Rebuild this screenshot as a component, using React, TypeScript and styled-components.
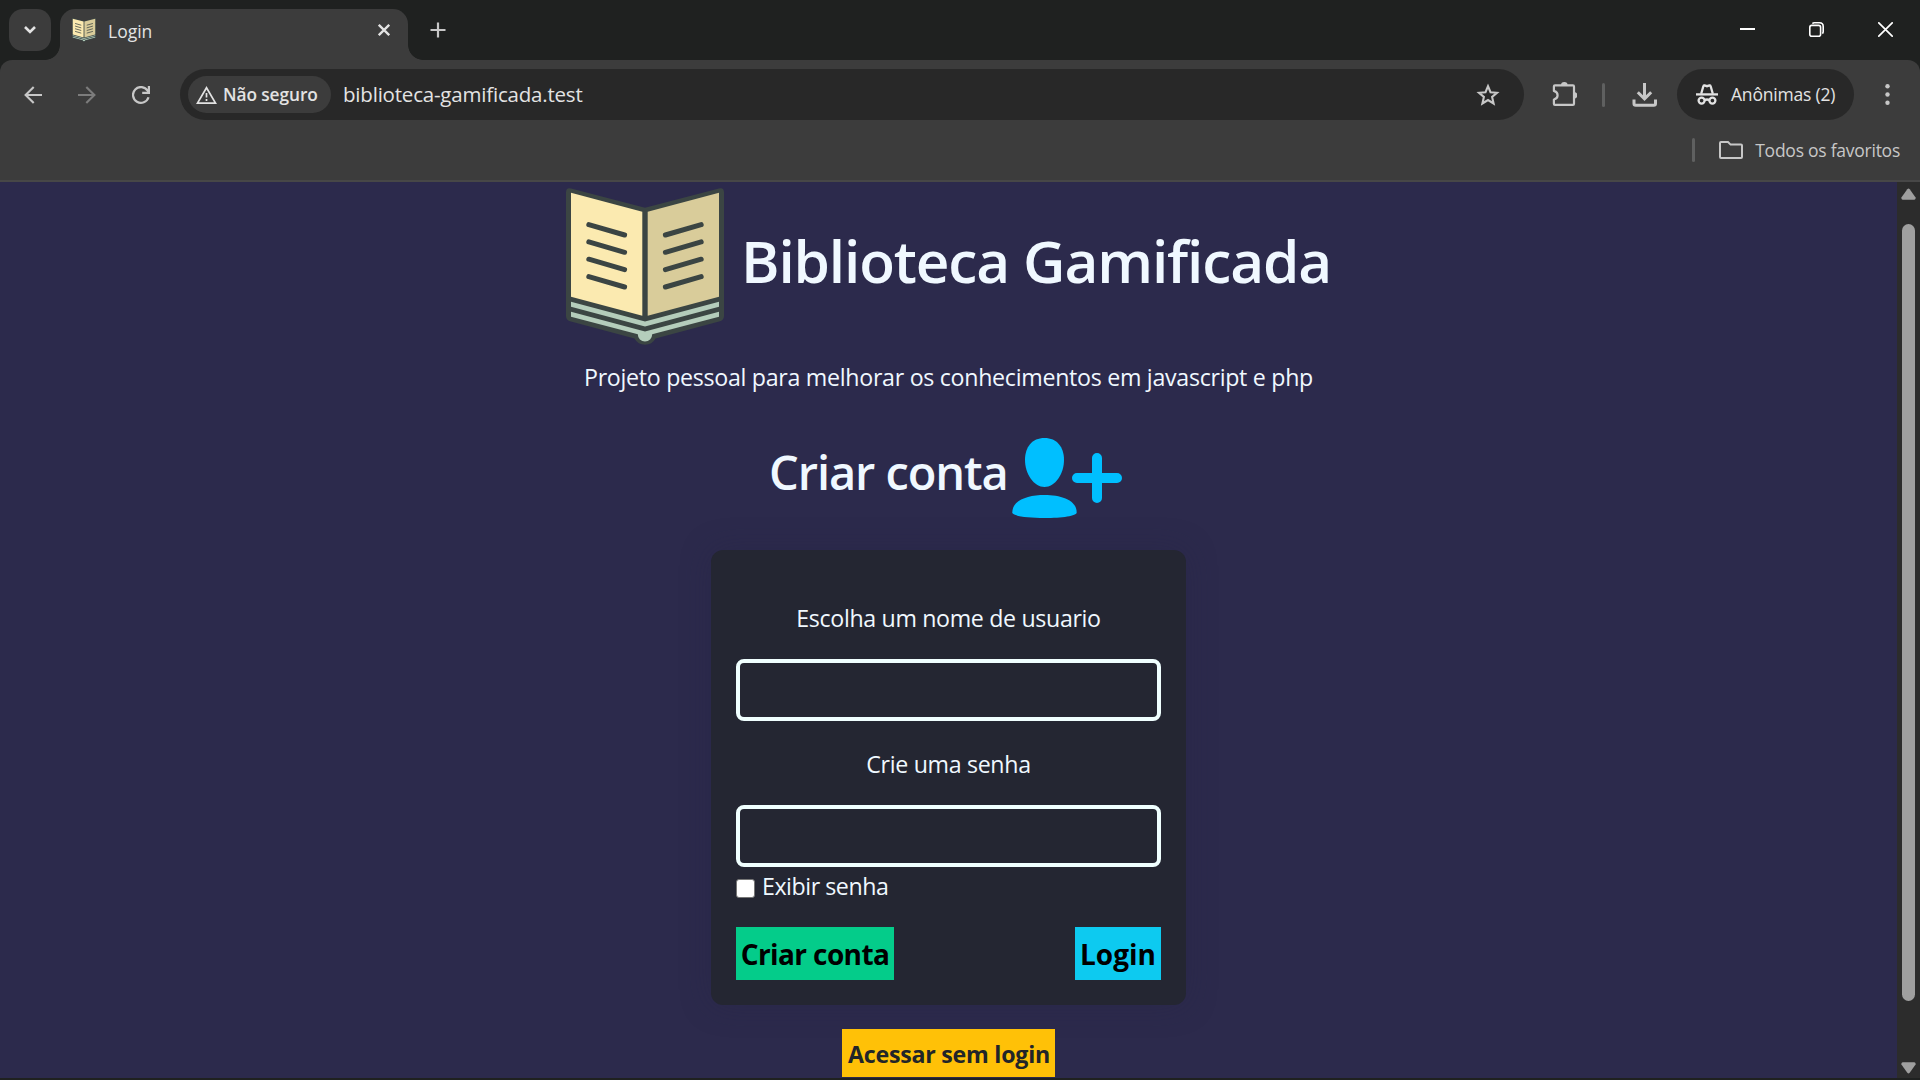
import React from "react";
import styled, { createGlobalStyle } from "styled-components";

const GlobalStyle = createGlobalStyle`
  * { box-sizing: border-box; }
  html, body { margin: 0; padding: 0; background: #1f2120; overflow: hidden; }
  body, button, input { font-family: "Open Sans", "Noto Sans", sans-serif; }
  svg { display: block; flex: none; }
`;

const Window = styled.div`
  width: 1920px;
  height: 1080px;
  display: flex;
  flex-direction: column;
  overflow: hidden;
  background: #1f2120;
`;

/* ---------- tab strip ---------- */
const TabStrip = styled.div`
  height: 60px;
  flex: none;
  display: flex;
  align-items: flex-start;
  padding: 9px 27px 0 9px;
`;

const TabSearch = styled.button`
  width: 42px;
  height: 42px;
  border: 0;
  padding: 0;
  border-radius: 14px;
  background: #3c3c3c;
  display: grid;
  place-items: center;
  margin-right: 9px;
`;

const Tab = styled.div`
  position: relative;
  width: 348px;
  height: 51px;
  border-radius: 15px 15px 0 0;
  background: #3c3c3c;
  display: flex;
  align-items: flex-start;
  padding: 9px 18px 0 12px;

  &::before,
  &::after {
    content: "";
    position: absolute;
    bottom: 0;
    width: 15px;
    height: 15px;
  }
  &::before {
    left: -15px;
    background: radial-gradient(circle at 0 0, transparent 14.5px, #3c3c3c 15.2px);
  }
  &::after {
    right: -15px;
    background: radial-gradient(circle at 100% 0, transparent 14.5px, #3c3c3c 15.2px);
  }
`;

const TabTitle = styled.span`
  flex: 1;
  margin-left: 12px;
  font-size: 17.5px;
  line-height: 26px;
  color: #e3e3e3;
`;

const TabClose = styled.div`
  padding-top: 6px;
`;

const NewTab = styled.div`
  margin: 13px 0 0 22px;
`;

const WindowControls = styled.div`
  margin-left: auto;
  display: flex;
  gap: 54px;
  padding-top: 13px;
`;

/* ---------- toolbar ---------- */
const Chrome = styled.div`
  height: 122px;
  flex: none;
  background: #3c3c3c;
  border-radius: 12px 12px 0 0;
  border-bottom: 2px solid #474747;
`;

const Toolbar = styled.div`
  display: flex;
  align-items: center;
  height: 69px;
  padding: 0 29px 0 24px;
`;

const NavIcons = styled.div`
  display: flex;
  gap: 36px;
  width: 156px;
`;

const Omnibox = styled.div`
  width: 1344px;
  height: 51px;
  border-radius: 26px;
  background: #282828;
  display: flex;
  align-items: center;
  padding: 0 24px 0 8px;
`;

const SecurityChip = styled.div`
  width: 143px;
  height: 37px;
  border-radius: 19px;
  background: #3c3c3c;
  display: flex;
  align-items: center;
  gap: 6px;
  padding-left: 8px;
`;

const ChipText = styled.span`
  font-size: 17.3px;
  font-weight: 600;
  letter-spacing: -0.08px;
  line-height: 26px;
  white-space: nowrap;
  color: #e3e3e3;
`;

const Url = styled.span`
  flex: 1;
  margin-left: 12px;
  font-size: 20.5px;
  letter-spacing: -0.2px;
  line-height: 30px;
  color: #e3e3e3;
  padding-bottom: 2px;
`;

const Separator = styled.div`
  width: 3px;
  height: 24px;
  border-radius: 2px;
  background: #5f6060;
`;

const Actions = styled.div`
  display: flex;
  align-items: center;
  padding-left: 28px;
  gap: 26px;
`;

const ToolbarDivider = styled(Separator)`
  margin: 0 1px 0 -1px;
`;

const IncognitoPill = styled.div`
  width: 177px;
  height: 51px;
  border-radius: 26px;
  background: #282828;
  display: flex;
  align-items: center;
  padding-left: 19px;
  gap: 13px;
  margin-left: -6px;
`;

const PillText = styled.span`
  font-size: 17.5px;
  letter-spacing: -0.2px;
  white-space: nowrap;
  line-height: 26px;
  padding-bottom: 1px;
  color: #e3e3e3;
`;

const Menu = styled.div`
  margin-left: 5px;
`;

const BookmarksBar = styled.div`
  height: 42px;
  display: flex;
  align-items: center;
  justify-content: flex-end;
  padding-right: 20px;
`;

const FolderIcon = styled.div`
  margin: 0 12px 0 24px;
`;

const BookmarksText = styled.span`
  font-size: 17.5px;
  letter-spacing: -0.25px;
  line-height: 26px;
  padding-bottom: 1px;
  color: #c7c7c7;
`;

/* ---------- page ---------- */
const Viewport = styled.div`
  height: 896px;
  flex: none;
  display: flex;
  background: #2c2a4c;
`;

const Page = styled.main`
  flex: 1;
  display: flex;
  flex-direction: column;
  align-items: center;
  padding-top: 6px;
  color: #f0f8ff;
`;

const Brand = styled.header`
  display: flex;
  align-items: flex-start;
  gap: 17px;
`;

const BrandName = styled.h1`
  margin: 0;
  width: 590px;
  white-space: nowrap;
  font-size: 58.5px;
  font-weight: 600;
  letter-spacing: -1.14px;
  line-height: 144px;
`;

const Tagline = styled.p`
  margin: 13px 0 0;
  font-size: 23.2px;
  letter-spacing: -0.29px;
  line-height: 36px;
`;

const SectionHead = styled.div`
  display: flex;
  margin-top: 43px;
  height: 80px;
  gap: 4px;
`;

const SectionTitle = styled.h2`
  margin: 0;
  padding-left: 1px;
  width: 240px;
  white-space: nowrap;
  font-size: 47px;
  font-weight: 600;
  letter-spacing: -1.08px;
  line-height: 69px;
`;

const Card = styled.form`
  margin: 32px 0 0;
  width: 475px;
  height: 455px;
  flex: none;
  padding: 25px;
  border-radius: 12px;
  background: #242632;
  box-shadow: 0 0 30px rgba(37, 38, 70, 0.35);
  display: flex;
  flex-direction: column;
`;

const FieldLabel = styled.label<{ $track: number }>`
  margin: 25px 0 23px;
  text-align: center;
  font-size: 23.2px;
  letter-spacing: ${(p) => p.$track}px;
  line-height: 36px;
`;

const Field = styled.input`
  width: 100%;
  height: 62px;
  flex: none;
  border: 4px solid #f0ffff;
  border-radius: 8px;
  background: transparent;
  color: #f0f8ff;
  font-size: 24px;
  outline: none;
`;

const CheckRow = styled.label`
  display: flex;
  margin-top: 1px;
  height: 36px;
  font-size: 23.2px;
  letter-spacing: -0.45px;
  line-height: 36px;
`;

const Check = styled.input`
  appearance: none;
  width: 19px;
  height: 19px;
  margin: 11px 7px 0 0;
  border: 1.5px solid #767676;
  border-radius: 3px;
  background: #fff;
`;

const ButtonRow = styled.div`
  display: flex;
  justify-content: space-between;
  margin-top: 23px;
`;

const FormButton = styled.button<{ $bg: string; $width: number; $track: number }>`
  width: ${(p) => p.$width}px;
  height: 53px;
  padding: 1px 0 0;
  border: 0;
  background: ${(p) => p.$bg};
  color: #000;
  font-size: 28px;
  font-weight: 700;
  letter-spacing: ${(p) => p.$track}px;
  white-space: nowrap;
`;

const GuestButton = styled.button`
  margin-top: 24px;
  width: 213px;
  height: 48px;
  flex: none;
  padding: 2px 0 0 1px;
  border: 0;
  background: #ffc107;
  color: #212529;
  font-size: 23.2px;
  font-weight: 700;
  letter-spacing: -0.24px;
  white-space: nowrap;
`;

const Scrollbar = styled.div`
  width: 23px;
  background: #2c2c2c;
  display: flex;
  flex-direction: column;
  align-items: center;
  padding: 6px 0 4px;
`;

const Thumb = styled.div`
  width: 13px;
  height: 777px;
  margin: 24px 0 61px;
  border-radius: 7px;
  background: #9f9f9f;
`;

function Book({ size }: { size: number }) {
  const rows = [0, 17.3, 34.6, 52];
  return (
    <svg width={size} height={size} viewBox="0 0 158 158">
      <path
        fill="#3b4543"
        d="M0 4.5Q0-.8 5 .4L79 19.7 153 .4Q158-.8 158 4.5V128Q158 132 154 133.2L89.5 150.5A12 12 0 0 1 68.5 150.5L4 133.2Q0 132 0 128Z"
      />
      <path fill="#fbeab0" d="M5 4.7 76.3 23.7V127.7L5 108.7Z" />
      <path fill="#d9cc9a" d="M153 4.7 81.7 23.7V127.7L153 108.7Z" />
      <path fill="#b4cdbb" d="M5 113.7 79 133.4 153 113.7V118.7L79 138.4 5 118.7Z" />
      <path fill="#b4cdbb" d="M5 123.7 79 143.4 153 123.7V128.7L86.2 146.3A7.2 7.2 0 0 1 71.8 146.3L5 128.7Z" />
      <g stroke="#3b4543" strokeWidth="5" strokeLinecap="round">
        {rows.map((y) => (
          <path key={y} d={`M22.8 ${36.6 + y}L58.6 ${47 + y}M99.4 ${47 + y}L135.2 ${36.6 + y}`} />
        ))}
      </g>
    </svg>
  );
}

const UserPlus = () => (
  <svg width="117" height="80" viewBox="0 0 117 80" fill="#00bfff">
    <path d="M32.5 0C45 0 52 9 52 22 52 36 43 49 32.5 49S13 36 13 22C13 9 20 0 32.5 0Z" />
    <path d="M32.5 57C49 57 64.7 62 64.7 74.5 64.7 78 50 80 32.5 80S.3 78 .3 74.5C.3 62 16 57 32.5 57Z" />
    <path d="M65 40H105M85 20V60" stroke="#00bfff" strokeWidth="10" strokeLinecap="round" />
  </svg>
);

export default function App() {
  return (
    <Window>
      <GlobalStyle />
      <TabStrip>
        <TabSearch aria-label="Pesquisar guias">
          <svg width="14" height="10" viewBox="0 0 14 10" fill="none" stroke="#e3e3e3" strokeWidth="2.6">
            <path d="M2 2 7 7 12 2" />
          </svg>
        </TabSearch>
        <Tab>
          <Book size={24} />
          <TabTitle>Login</TabTitle>
          <TabClose>
            <svg width="12" height="12" viewBox="0 0 12 12" stroke="#e3e3e3" strokeWidth="2.3">
              <path d="M.8.8 11.2 11.2M11.2.8.8 11.2" />
            </svg>
          </TabClose>
        </Tab>
        <NewTab>
          <svg width="16" height="16" viewBox="0 0 16 16" stroke="#c7c7c7" strokeWidth="2.2">
            <path d="M8 .5V15.5M.5 8H15.5" />
          </svg>
        </NewTab>
        <WindowControls>
          <svg width="15" height="15" viewBox="0 0 15 15" stroke="#fff" strokeWidth="2">
            <path d="M0 7H15" />
          </svg>
          <svg width="15" height="15" viewBox="0 0 15 15" fill="none" stroke="#fff" strokeWidth="1.6">
            <rect x=".8" y="3.4" width="10.8" height="10.8" rx="2" />
            <path d="M3.4 1.6Q4.2.8 5.4.8H10.5Q14.2.8 14.2 4.5V9.6Q14.2 10.8 13.4 11.6" />
          </svg>
          <svg width="15" height="15" viewBox="0 0 15 15" stroke="#fff" strokeWidth="1.7" strokeLinecap="round">
            <path d="M.8.8 14.2 14.2M14.2.8.8 14.2" />
          </svg>
        </WindowControls>
      </TabStrip>

      <Chrome>
        <Toolbar>
          <NavIcons>
            <svg width="18" height="18" viewBox="0 0 18 18" fill="none" stroke="#c7c7c7" strokeWidth="2.1">
              <path d="M18 9H2M9.7.9 1.6 9 9.7 17.1" />
            </svg>
            <svg width="18" height="18" viewBox="0 0 18 18" fill="none" stroke="#7c7c7c" strokeWidth="2.1">
              <path d="M0 9H16M8.3.9 16.4 9 8.3 17.1" />
            </svg>
            <svg width="18" height="18" viewBox="0 0 18 18" fill="none" stroke="#c7c7c7" strokeWidth="2.2">
              <path d="M16.5 11.2A7.9 7.9 0 1 1 15.6 4.7L16.6 6.2M16.9 0V6.8H10.2" />
            </svg>
          </NavIcons>
          <Omnibox>
            <SecurityChip>
              <svg width="21" height="18" viewBox="0 0 21 18" fill="none" stroke="#e3e3e3" strokeWidth="1.7">
                <path d="M10.5 1.7 19.5 17.1H1.5Z" />
                <path d="M10.5 7V11.6M10.5 13V15" />
              </svg>
              <ChipText>Não seguro</ChipText>
            </SecurityChip>
            <Url>biblioteca-gamificada.test</Url>
            <svg width="24" height="24" viewBox="0 0 24 24" fill="none" stroke="#c7c7c7" strokeWidth="2.1">
              <path d="M12 3.2 14.5 9.2 21 9.8 16.1 14 17.6 20.5 12 17.1 6.4 20.5 7.9 14 3 9.8 9.5 9.2Z" />
            </svg>
          </Omnibox>
          <Actions>
            <svg width="25" height="26" viewBox="0 0 25 26" fill="none" stroke="#c7c7c7" strokeWidth="2.2" strokeLinejoin="round">
              <path d="M3 3.4H20.9Q22 3.4 22 4.5V21.8Q22 22.9 20.9 22.9H3Q1.9 22.9 1.9 21.8V17.5Q5.6 16.5 5.6 13.2T1.9 8.9V4.5Q1.9 3.4 3 3.4Z" />
              <path d="M9 3.4A3.3 3.3 0 0 1 15.6 3.4ZM22 9.9A3.3 3.3 0 0 1 22 16.5Z" fill="#c7c7c7" stroke="none" />
            </svg>
            <ToolbarDivider />
            <svg width="25" height="24" viewBox="0 0 25 24" fill="none" stroke="#c7c7c7" strokeWidth="3">
              <path d="M12.5 0V15M5.8 9.2 12.5 15.8 19.2 9.2" />
              <path d="M2 16.5V20.6Q2 22.3 3.7 22.3H21.8Q23.5 22.3 23.5 20.6V16.5" />
            </svg>
            <IncognitoPill>
              <svg width="22" height="21" viewBox="0 0 22 21" fill="none" stroke="#e3e3e3" strokeWidth="2.3">
                <path d="M0 10.4H22" />
                <path d="M5.2 9.8 7.4 2Q7.6 1.1 8.5 1.4L11 2.2 13.5 1.4Q14.4 1.1 14.6 2L16.8 9.8" />
                <circle cx="5.6" cy="16.6" r="3" />
                <circle cx="16.4" cy="16.6" r="3" />
                <path d="M8.5 16.2Q11 14.8 13.5 16.2" />
              </svg>
              <PillText>Anônimas (2)</PillText>
            </IncognitoPill>
            <Menu>
              <svg width="5" height="21" viewBox="0 0 5 21" fill="#c7c7c7">
                <circle cx="2.5" cy="2.3" r="2.2" />
                <circle cx="2.5" cy="10.5" r="2.2" />
                <circle cx="2.5" cy="18.7" r="2.2" />
              </svg>
            </Menu>
          </Actions>
        </Toolbar>
        <BookmarksBar>
          <Separator />
          <FolderIcon>
            <svg width="24" height="18" viewBox="0 0 24 18" fill="none" stroke="#c7c7c7" strokeWidth="2">
              <path d="M2 1H9L11.6 3.6H22Q23 3.6 23 4.6V16Q23 17 22 17H2Q1 17 1 16V2Q1 1 2 1Z" />
            </svg>
          </FolderIcon>
          <BookmarksText>Todos os favoritos</BookmarksText>
        </BookmarksBar>
      </Chrome>

      <Viewport>
        <Page>
          <Brand>
            <Book size={158} />
            <BrandName>Biblioteca Gamificada</BrandName>
          </Brand>
          <Tagline>Projeto pessoal para melhorar os conhecimentos em javascript e php</Tagline>
          <SectionHead>
            <SectionTitle>Criar conta</SectionTitle>
            <UserPlus />
          </SectionHead>
          <Card>
            <FieldLabel htmlFor="user" $track={-0.34}>Escolha um nome de usuario</FieldLabel>
            <Field id="user" type="text" />
            <FieldLabel htmlFor="password" $track={-0.32}>Crie uma senha</FieldLabel>
            <Field id="password" type="password" />
            <CheckRow>
              <Check type="checkbox" />
              Exibir senha
            </CheckRow>
            <ButtonRow>
              <FormButton type="button" $bg="#04cc8a" $width={158} $track={-0.6}>Criar conta</FormButton>
              <FormButton type="button" $bg="#0dcaf0" $width={86} $track={0}>Login</FormButton>
            </ButtonRow>
          </Card>
          <GuestButton>Acessar sem login</GuestButton>
        </Page>
        <Scrollbar>
          <svg width="15" height="12" viewBox="0 0 15 12" fill="#9f9f9f">
            <path d="M6.3 1.2Q7.5 0 8.7 1.2L14.6 9.6Q15 11.5 13.4 11.7H1.6Q0 11.5.4 9.6Z" />
          </svg>
          <Thumb />
          <svg width="15" height="12" viewBox="0 0 15 12" fill="#9f9f9f">
            <path d="M6.3 10.8Q7.5 12 8.7 10.8L14.6 2.4Q15 .5 13.4.3H1.6Q0 .5.4 2.4Z" />
          </svg>
        </Scrollbar>
      </Viewport>
    </Window>
  );
}
